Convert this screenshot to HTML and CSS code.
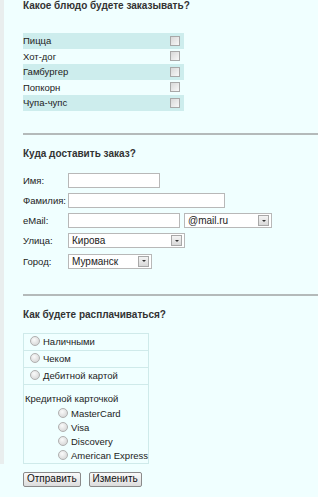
FILE: index.html
```html
<!DOCTYPE html>
<html lang="ru">
<head>
    <meta charset="UTF-8">
    <title>Заказ</title>
    <link rel="stylesheet" href="styles.css">
</head>
<body>
    <div class="page">
        <!-- Блюда -->
        <h3>Какое блюдо будете заказывать?</h3>
        <table class="dishes">
            <tr class="hl"><td>Пицца</td><td class="chk"><input type="checkbox"></td></tr>
            <tr><td>Хот-дог</td><td class="chk"><input type="checkbox"></td></tr>
            <tr class="hl"><td>Гамбургер</td><td class="chk"><input type="checkbox"></td></tr>
            <tr><td>Попкорн</td><td class="chk"><input type="checkbox"></td></tr>
            <tr class="hl"><td>Чупа-чупс</td><td class="chk"><input type="checkbox"></td></tr>
        </table>

        <hr>

        <!-- Доставка -->
        <h3 class="h-delivery">Куда доставить заказ?</h3>
        <div class="address">
            <div class="row">
                <label>Имя:</label>
                <input type="text" class="w-name">
            </div>
            <div class="row">
                <label>Фамилия:</label>
                <input type="text" class="w-surname">
            </div>
            <div class="row">
                <label>eMail:</label>
                <input type="text" class="w-mail">
                <div class="select w-domain"><span>@mail.ru</span><i></i></div>
            </div>
            <div class="row">
                <label>Улица:</label>
                <div class="select w-street"><span>Кирова</span><i></i></div>
            </div>
            <div class="row">
                <label>Город:</label>
                <div class="select w-city"><span>Мурманск</span><i></i></div>
            </div>
        </div>

        <hr class="hr-pay">

        <!-- Оплата -->
        <h3 class="h-pay">Как будете расплачиваться?</h3>
        <table class="pay">
            <tr><td><span class="radio"></span>Наличными</td></tr>
            <tr><td><span class="radio"></span>Чеком</td></tr>
            <tr><td><span class="radio"></span>Дебитной картой</td></tr>
            <tr>
                <td class="credit">
                    <div class="credit-title">Кредитной карточкой</div>
                    <div class="cards">
                        <div><span class="radio"></span>MasterCard</div>
                        <div><span class="radio"></span>Visa</div>
                        <div><span class="radio"></span>Discovery</div>
                        <div><span class="radio"></span>American Express</div>
                    </div>
                </td>
            </tr>
        </table>
    </div>

    <div class="buttons">
        <button>Отправить</button>
        <button>Изменить</button>
    </div>
</body>
</html>
```

FILE: styles.css
```css
/* General */
body {
    margin: 0;
    background-color: #f0ffff;
    font-family: "Liberation Sans", Arial, sans-serif;
    font-size: 9.5px;
    color: #222;
}

.page {
    border-left: 4px solid #e9eeee;
    padding-left: 19px;
}

h3 {
    margin: 0;
    font-size: 10px;
    line-height: 12px;
    color: #333;
}

/* Dishes */
.dishes {
    border-collapse: collapse;
    width: 161px;
    margin-top: 21px;
}

.dishes td {
    height: 15.5px;
    padding: 0;
    line-height: 15px;
}

.dishes tr.hl td {
    background-color: #cdeded;
}

.dishes .chk {
    width: 14px;
    text-align: left;
}

.dishes input[type="checkbox"] {
    appearance: none;
    display: block;
    width: 10px;
    height: 10px;
    margin: 0;
    border: 1px solid #a8a8a8;
    background: linear-gradient(135deg, #d8d8d8, #f8f8f8);
    box-sizing: border-box;
}

hr {
    border: none;
    border-top: 2px solid #b4baba;
    margin: 22px 0 0 0;
}

/* Address */
.h-delivery {
    margin-top: 13px;
}

.address {
    display: flex;
    flex-direction: column;
    gap: 5.25px;
    margin-top: 13px;
}

.row {
    display: flex;
    align-items: center;
    height: 15px;
}

.row label {
    width: 45px;
}

.row input[type="text"] {
    height: 15px;
    box-sizing: border-box;
    border: 1px solid #b8b8b8;
    background: #fff;
    margin: 0;
    padding: 0;
}

.w-name { width: 92px; }
.w-surname { width: 157px; }
.w-mail { width: 112px; }

.select {
    display: flex;
    align-items: center;
    height: 15px;
    box-sizing: border-box;
    border: 1px solid #b8b8b8;
    background: #fff;
    padding-left: 3px;
    font-size: 10px;
}

.select span {
    flex: 1;
}

.select i {
    width: 9px;
    height: 9px;
    margin-right: 2px;
    border: 1px solid #a8a8a8;
    background: linear-gradient(#f4f4f4, #d8d8d8);
    position: relative;
}

.select i::after {
    content: "";
    position: absolute;
    left: 2.5px;
    top: 3.5px;
    border-left: 2px solid transparent;
    border-right: 2px solid transparent;
    border-top: 2px solid #333;
}

.w-domain { width: 88px; margin-left: 4px; }
.w-street { width: 117px; }
.w-city { width: 84px; }

.hr-pay {
    margin-top: 25px;
}

/* Payment */
.h-pay {
    margin-top: 13px;
}

.pay {
    border-collapse: collapse;
    width: 122px;
    margin-top: 12px;
}

.pay td {
    border: 1px solid #cfeaea;
    height: 17px;
    padding: 0 0 0 6px;
    box-sizing: border-box;
    white-space: nowrap;
}

.radio {
    display: inline-block;
    width: 8px;
    height: 8px;
    border: 1px solid #b0b0b0;
    border-radius: 50%;
    background: radial-gradient(circle at 40% 35%, #fafafa, #cfcfcf);
    vertical-align: -1px;
    margin-right: 3px;
}

.pay td.credit {
    height: 79px;
    vertical-align: top;
    padding: 8px 0 0 1px;
}

.credit-title {
    line-height: 12px;
}

.cards {
    padding-left: 33px;
    margin-top: 2px;
}

.cards div {
    line-height: 14px;
}

/* Buttons */
.buttons {
    display: flex;
    gap: 8px;
    padding: 8px 0 0 23px;
}

.buttons button {
    font-family: "Liberation Sans", Arial, sans-serif;
    font-size: 10px;
    height: 15px;
    margin: 0;
    padding: 0 3px;
    border: 1px solid #8a8a8a;
    border-radius: 2px;
    background: linear-gradient(#fafafa, #dcdcdc);
    color: #111;
    line-height: 12px;
}
```
